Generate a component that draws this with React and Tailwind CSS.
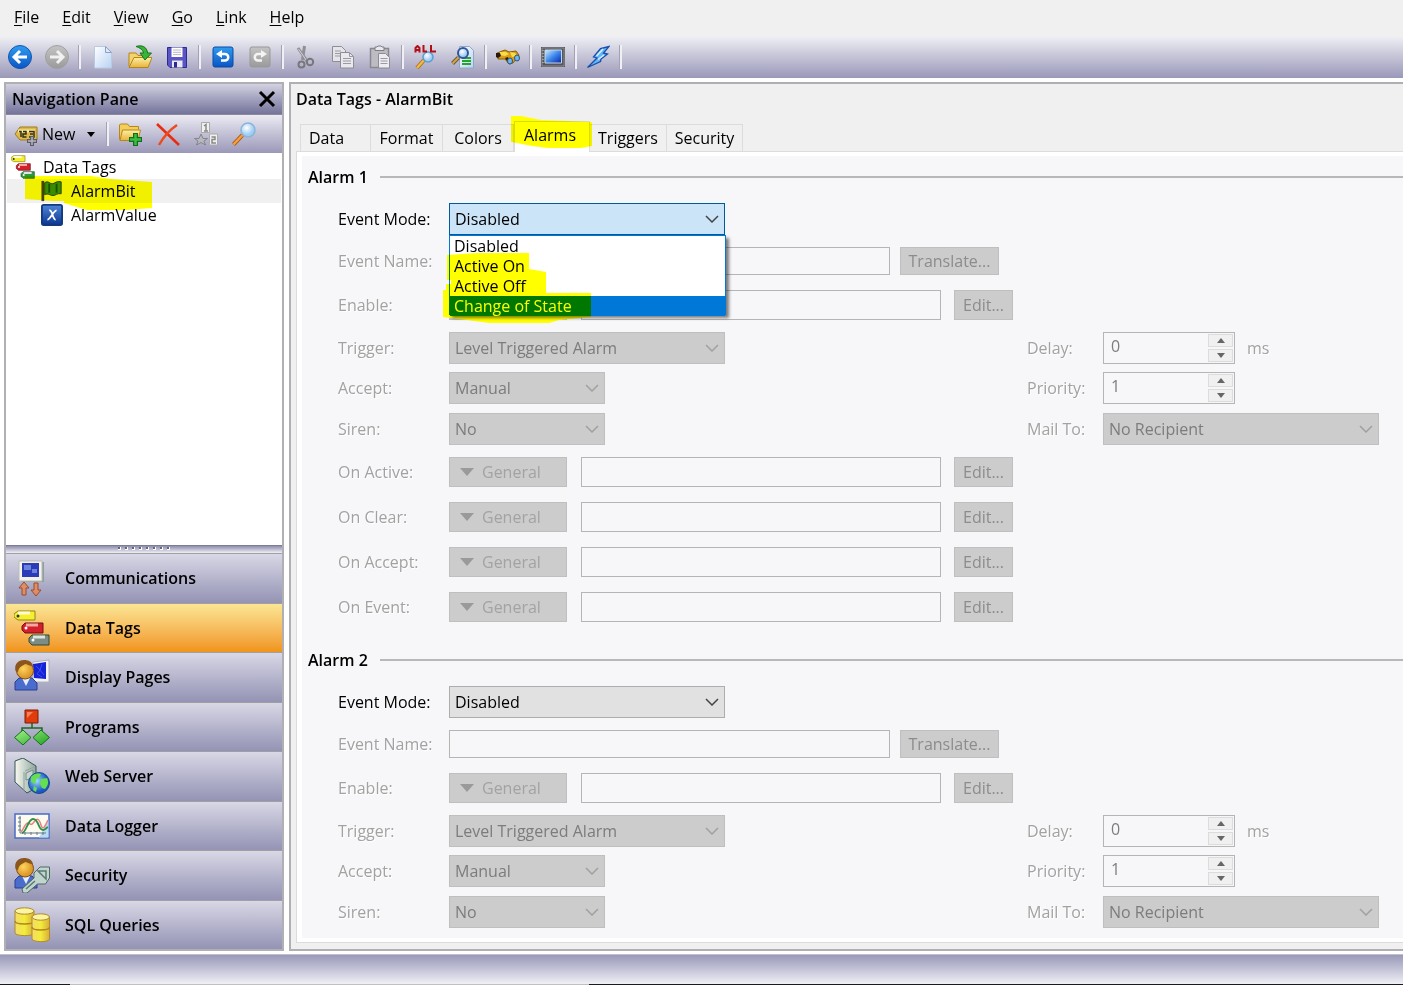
import React from "react";

const svgBase = "block h-6 w-6 shrink-0";

function Gradients() {
  return (
    <svg className="absolute h-0 w-0" aria-hidden="true">
      <defs>
        <linearGradient id="blue" x1="0" y1="0" x2="0" y2="1"><stop offset="0" stopColor="#2f9cf0" /><stop offset="1" stopColor="#0a55c4" /></linearGradient>
        <linearGradient id="navy" x1="0" y1="0" x2="0" y2="1"><stop offset="0" stopColor="#4f86d8" /><stop offset="1" stopColor="#0a3590" /></linearGradient>
        <linearGradient id="grey" x1="0" y1="0" x2="0" y2="1"><stop offset="0" stopColor="#c4c4c4" /><stop offset="1" stopColor="#9a9a9a" /></linearGradient>
        <linearGradient id="page" x1="0" y1="0" x2="1" y2="1"><stop offset="0" stopColor="#ffffff" /><stop offset="1" stopColor="#b9d2f3" /></linearGradient>
        <linearGradient id="gold" x1="0" y1="0" x2="0" y2="1"><stop offset="0" stopColor="#fdf0a4" /><stop offset="1" stopColor="#e8b23c" /></linearGradient>
        <linearGradient id="screen" x1="0" y1="0" x2="1" y2="1"><stop offset="0" stopColor="#d2eeff" /><stop offset=".5" stopColor="#3d88ec" /><stop offset="1" stopColor="#0b22a8" /></linearGradient>
        <linearGradient id="leaf" x1="0" y1="0" x2="1" y2="1"><stop offset="0" stopColor="#a4f08c" /><stop offset="1" stopColor="#1fa51d" /></linearGradient>
        <linearGradient id="steel" x1="0" y1="0" x2="1" y2="0"><stop offset="0" stopColor="#f8f8f0" /><stop offset="1" stopColor="#8ea79f" /></linearGradient>
        <linearGradient id="drum" x1="0" y1="0" x2="1" y2="0"><stop offset="0" stopColor="#f3dc68" /><stop offset=".5" stopColor="#f2ec3c" /><stop offset="1" stopColor="#d8ae3a" /></linearGradient>
        <radialGradient id="skin" cx=".4" cy=".4"><stop offset="0" stopColor="#ffd45c" /><stop offset="1" stopColor="#dd9a2c" /></radialGradient>
        <radialGradient id="globe" cx=".4" cy=".4"><stop offset="0" stopColor="#9fdcf8" /><stop offset="1" stopColor="#1c58c4" /></radialGradient>
        <radialGradient id="lens" cx=".4" cy=".35"><stop offset="0" stopColor="#ffffff" /><stop offset="1" stopColor="#9ccdf2" /></radialGradient>
      </defs>
    </svg>
  );
}

function Icon({ children, box = "0 0 24 24", className = svgBase }) {
  return <svg viewBox={box} className={className} fill="none" aria-hidden="true">{children}</svg>;
}

const icons = {
  back: <Icon><circle cx="12" cy="12" r="11.500" fill="url(#blue)" stroke="#1455ae" /><path d="M19 12H6M12 6l-6 6 6 6" stroke="#fff" strokeWidth="3" /></Icon>,
  forward: <Icon><circle cx="12" cy="12" r="11.500" fill="url(#grey)" stroke="#a0a0a0" /><path d="M5 12h13M12 6l6 6-6 6" stroke="#f1f1f1" strokeWidth="3" /></Icon>,
  blank: <Icon><path d="M3.500 1.500h11l6 6v15.500h-17z" fill="url(#page)" stroke="#b9cbe2" /><path d="M14.500 1.500v6h6z" fill="#dce8f8" stroke="#8aa2c4" /></Icon>,
  open: <Icon><path d="M1 21V8h7l2 2.500h10V13" fill="#f5d36a" stroke="#b58616" /><path d="M1 22.500 6 12.500h18l-4 10z" fill="url(#gold)" stroke="#b58616" /><path d="M8 1.500C14-.5 19 2 19.500 8h4L17 15l-5-7h3.500C15 4.500 12 3 8 1.500z" fill="#37b536" stroke="#14761b" /></Icon>,
  save: <Icon><path d="M2.500 2.500h19v20H5l-2.500-2.500z" fill="#5a55c4" stroke="#2d2a92" /><path d="M6.500 2.500h11v9.500h-11z" fill="#fff" /><path d="M8 5h8M8 7.300h8M8 9.600h8" stroke="#b7b7c6" /><path d="M7 15.500h10.500v7H7z" fill="#e9e9f4" /><path d="M9 17h3v5.500H9z" fill="#2d2a92" /></Icon>,
  undo: <Icon><rect x="2" y="2" width="20" height="20" rx="2" fill="url(#blue)" stroke="#0b4ba6" /><path d="M9 9h5a3 3 0 0 1 0 6.500h-4" stroke="#fff" strokeWidth="2.500" /><path d="M5 9 11 5v8z" fill="#fff" /></Icon>,
  redo: <Icon><rect x="2" y="2" width="20" height="20" rx="2" fill="url(#grey)" stroke="#999" /><path d="M15 9h-5a3 3 0 0 0 0 6.500h4" stroke="#f4f4f4" strokeWidth="2.500" /><path d="M19 9 13 5v8z" fill="#f4f4f4" /></Icon>,
  cut: <Icon><path d="m4 3 9 13M10.500 1 8.500 15" stroke="#8f8f95" strokeWidth="3" /><path d="m4.500 4 8 11.500" stroke="#d4d4d8" /><circle cx="7.500" cy="19.500" r="3" stroke="#77777d" strokeWidth="2" /><circle cx="16" cy="17" r="3.200" stroke="#77777d" strokeWidth="2" /></Icon>,
  copy: <Icon><path d="M1.500 1.500h9l4 4v11h-13z" fill="#e4e4ea" stroke="#8d8d92" /><path d="M4 6h6M4 8.500h6M4 11h6" stroke="#9a9aa0" /><path d="M9.500 7.500h9l4 4v11.500h-13z" fill="#e8e8ee" stroke="#8d8d92" /><path d="M18.500 7.500v4h4M12 13.500h8M12 16h8M12 18.500h8" stroke="#9a9aa0" /></Icon>,
  paste: <Icon><path d="M2.500 3.500h18v19h-18z" fill="#bcbcc2" stroke="#88888e" strokeWidth="1.500" /><path d="M7 5.500V2h2l1-1h3l1 1h2v3.500z" fill="#e8e8ee" stroke="#7d7d83" /><path d="M10.500 8.500h7l4 4V23h-11z" fill="#ececf2" stroke="#8d8d92" /><path d="M12.500 13.500h7M12.500 16h7M12.500 18.500h7" stroke="#9a9aa0" /></Icon>,
  findAll: <Icon><path d="m3 23 7-8" stroke="#a86b12" strokeWidth="4" /><path d="m3 23 7-8" stroke="#f0b848" strokeWidth="2.500" /><circle cx="14" cy="12" r="5" fill="url(#lens)" stroke="#5a9fd6" strokeWidth="1.500" /><path d="M1.500 7.500V3l2-2 2 2v4.500M1.500 5h4M9.500 0v6.500H13M17 0v6.500h5" stroke="#b30f18" strokeWidth="2" /></Icon>,
  preview: <Icon><path d="M8.500 1.500h10l4 4v17.500h-14z" fill="url(#page)" stroke="#8ea7c8" /><path d="M11 13h9M11 16h9M11 19h9" stroke="#24a52c" strokeWidth="2" /><path d="m1.500 18.500 6-6" stroke="#6b5a3b" strokeWidth="4" /><path d="m1.500 18.500 6-6" stroke="#d4a348" strokeWidth="2" /><circle cx="12" cy="8" r="5" fill="url(#lens)" stroke="#31569c" strokeWidth="2" /></Icon>,
  binoculars: <Icon><path d="m1 8 8-3 4 2 7-1 3 4-2 3-4 5-4 1-4-5H2z" fill="#dd9d10" stroke="#8a5c0a" /><path d="m4 7 6 0 3 2-4 2-6-1M14 7l5 1 2 3-5 1z" fill="#f9dc4b" /><path d="M0 8h4l1 3-3 2-2-1zM9 13l3-1 1 3-2 1z" fill="#241a0b" /><ellipse cx="14" cy="16" rx="2.500" ry="3" fill="#70b7ec" stroke="#315278" /><ellipse cx="21" cy="13" rx="2.500" ry="3" fill="#70b7ec" stroke="#315278" /></Icon>,
  monitor: <Icon><path d="M0 2h24v20H0z" fill="#54565b" /><path d="M1 3h22v18H1z" stroke="#8b8d92" /><path d="M4 5h16.500v13H4z" fill="url(#screen)" stroke="#c5d6e8" /><path d="M2 5v14" stroke="#d9d9d9" strokeDasharray="1 2" /></Icon>,
  bolt: <Icon><path d="M1.500 22.500 11 13 7.500 12l7-8.500L23 1.500 17.500 8l4 1-6.500 5-.5 2.500z" fill="#64b5f5" stroke="#174eae" strokeWidth="1.300" /><path d="m10.500 11 6.500-7M12 14.500l6-4.500" stroke="#d8f0ff" strokeWidth="1.500" /></Icon>,
  newTag: <Icon><path d="M1 12 6 5h17v13H6z" fill="#ddb945" stroke="#a27a1e" /><path d="M4 9h17" stroke="#fae99c" strokeWidth="3" /><path d="M5 9.500h2v5.500M9 9.500h3v2.500H9V15h3.500M15 9.500h5V15h-5M16 12h3" stroke="#33301f" strokeWidth="1.500" /><path d="M18 14v10M13 19h10" stroke="#5c5c64" strokeWidth="4" /><path d="M18 15v8M14 19h8" stroke="#b7b7c4" strokeWidth="1.500" /></Icon>,
  newFolder: <Icon><path d="M1.500 17.500V3l1-1h7l2 2.500h9v3" fill="#f4ce5c" stroke="#b98618" /><path d="M2 18.500 4.500 8h18L20 18.500z" fill="url(#gold)" stroke="#b98618" /><path d="M17.500 11v13M11 17.500h13" stroke="#116e1a" strokeWidth="5" /><path d="M17.500 12v11M12 17.500h11" stroke="#3ebc42" strokeWidth="2.500" /></Icon>,
  remove: <Icon><path d="m1 2 22 21" stroke="#e92c10" strokeWidth="2.500" /><path d="M21 3C15 7 8 14 3 23" stroke="#ee4a20" strokeWidth="2.500" /></Icon>,
  sort: <Icon><path d="M7.500.5h8v10h-8zM15.500 12h8v11h-8z" fill="#f0f0f0" stroke="#aaa" /><path d="m10 4 2-1.500V9m-2 0h4M17.500 15h3.500v2.500h-3v3.500h4" stroke="#888" strokeWidth="1.500" /><path d="m7 12 2 4.500h4.500L10 19l1.500 4L7 20.500 2.500 23 4 19 .5 16.500H5z" fill="#b8b8c0" stroke="#84848c" /></Icon>,
  search: <Icon><path d="m1.500 22.500 9-9.500" stroke="#ad5a10" strokeWidth="4" /><path d="m1.500 22.500 9-9.500" stroke="#f2a043" strokeWidth="2.500" /><circle cx="16" cy="8" r="7" fill="url(#lens)" stroke="#8ab4dc" strokeWidth="1.500" /></Icon>,
};

const navIcon = "block h-9 w-9 shrink-0";

function TagStack({ className = navIcon, last = "#7b8d84" }) {
  return (
    <Icon box="0 0 36 36" className={className}>
      <path d="M4 1h17v9H4L0 7V4z" fill="#f6ef2a" stroke="#8d8426" /><path d="M4 3h12" stroke="#fffcd6" strokeWidth="3" />
      <path d="M11 13h18v10H11l-3-3v-4z" fill="#d3202c" stroke="#6e1016" /><path d="M12 15h12" stroke="#f7a7a0" strokeWidth="3" />
      <path d="M18 25h17v10H18l-3-3v-4z" fill={last} stroke="#2e4a3c" /><path d="M19 27h12" stroke="#dce6e0" strokeWidth="3" />
      <circle cx="4" cy="6" r="1.500" fill="#333" /><circle cx="12" cy="18" r="1.500" fill="#fff" /><circle cx="19" cy="30" r="1.500" fill="#fff" />
    </Icon>
  );
}

function Person() {
  return (
    <g>
      <path d="M1 31v-8l4-4h13l5 5v7z" fill="#4a6ccc" stroke="#2b3f92" /><path d="m8 19 4 8 4-8z" fill="#e8eefc" />
      <circle cx="11" cy="11.500" r="8.500" fill="url(#skin)" stroke="#7b4a15" />
      <path d="M1.500 12C0 5 4 1 10 1c5 0 8 2 9 6-4 0-6-2-8-2-2 2-6 2-7 8z" fill="#8a561c" />
    </g>
  );
}

const navItems = [
  ["Communications", <Icon box="0 0 36 36" className={navIcon}><path d="M7 2h23v20H7z" fill="#8c9f9c" /><path d="M5 1h23v20H5z" fill="#f3f1ea" stroke="#b9bdb8" /><path d="M8 3h17v14H8z" fill="#2c3cb9" /><path d="M10 5h7v5h-7zM18 9h5v4h-5z" fill="#6b83dc" /><path d="m10 22 5 6h-3v7H8v-7H5zM22 36l5-6h-3v-7h-4v7h-3z" fill="#dd8e68" stroke="#9c4b2c" /></Icon>],
  ["Data Tags", <TagStack />],
  ["Display Pages", <Icon box="0 0 36 36" className={navIcon}><path d="M19 3 35 1v22H19z" fill="#f4f4f4" stroke="#b0b0bc" /><path d="m19 5 13-2v17l-12-1z" fill="#1522d8" /><path d="m22 7 4 4-3 4 5 3M28 5l-2 6 4 5" stroke="#3a50e8" /><Person /></Icon>],
  ["Programs", <Icon box="0 0 36 36" className={navIcon}><path d="M18 14v5M8 25v-6h20v6" stroke="#1d6a24" strokeWidth="1.500" /><path d="M11 1h13v13H11z" fill="#e03c0c" stroke="#7c1c08" /><path d="M13 3h6l-6 6z" fill="#f5825a" /><path d="m9 21 8 7.500L9 36l-8.500-7.500zM27 21l8.500 7.500L27 36l-8-7.500z" fill="url(#leaf)" stroke="#12701a" /></Icon>],
  ["Web Server", <Icon box="0 0 36 36" className={navIcon}><path d="m1 3 8-3 13 8v22l-9 5L1 24z" fill="url(#steel)" stroke="#345650" /><path d="M10 14v19M11 13l9-4" stroke="#8da59e" /><path d="m12 15 7-3v8l-7 2z" fill="#c8d4ce" stroke="#78928a" /><circle cx="25" cy="25" r="10.500" fill="url(#globe)" stroke="#174a8c" /><path d="M17 19c3-4 8-4 10-3l-2 4-3 1-1 5-4-2zM27 21l6-1c2 4 1 8-2 11l-3-1-2-4z" fill="#64e04e" /><path d="m20 28 3 2-1 4-3-2z" fill="#64e04e" /></Icon>],
  ["Data Logger", <Icon box="0 0 36 36" className={navIcon}><path d="M1 6h34v24H1z" fill="#fdfaf0" stroke="#4a6cc8" strokeWidth="1.500" /><path d="M25 29.500 34.500 12v17.500z" fill="#b8dcf4" /><path d="M6 8v17h26M4 10h3M4 14h3M4 18h3M4 22h3M11 24v3M17 24v3M23 24v3M29 24v3" stroke="#637a8c" /><path d="M7 24c3-3 4-9 7-9 3 1 3 3 6-1s5-4 7 3 5-1 7-5" stroke="#ec8080" strokeWidth="1.500" /><path d="M8 25c4 0 6-14 11-14 6 0 5 11 10 11 2 0 3-2 5-3" stroke="#2f9046" strokeWidth="1.800" /></Icon>],
  ["Security", <Icon box="0 0 36 36" className={navIcon}><Person /><path d="m8 32 12-11V16l6-6h9.500v11l-4 6h-8L13 36H9z" fill="#c2d4ce" stroke="#4c6a62" /><path d="M24 14h8v8zM12 32l9-8" stroke="#587a70" strokeWidth="1.500" /></Icon>],
  ["SQL Queries", <Icon box="0 0 36 36" className={navIcon}><path d="M1 4v22c0 3 18 4 19 0V4z" fill="url(#drum)" stroke="#b08a2c" /><ellipse cx="10.500" cy="4" rx="9.500" ry="3.200" fill="#fbf4a0" stroke="#b08a2c" /><path d="M1 14c0 4 19 4 19 0" stroke="#b5861c" strokeWidth="1.500" /><path d="M18 10v22c0 3 17 4 17.500 0V10z" fill="url(#drum)" stroke="#b08a2c" /><ellipse cx="26.700" cy="10" rx="8.700" ry="3.200" fill="#fbf4a0" stroke="#b08a2c" /><path d="M18 20c0 4 17.500 4 17.500 0" stroke="#b5861c" strokeWidth="1.500" /></Icon>],
];

const toolbarGroups = [
  [["Back", "back"], ["Forward", "forward"]],
  [["New", "blank"], ["Open", "open"], ["Save", "save"]],
  [["Undo", "undo"], ["Redo", "redo"]],
  [["Cut", "cut"], ["Copy", "copy"], ["Paste", "paste"]],
  [["Find all", "findAll"], ["Find in page", "preview"]],
  [["Find", "binoculars"]],
  [["Display", "monitor"]],
  [["Run", "bolt"]],
];

function Divider() {
  return <span className="h-6 w-[3px] border-r-2 border-l border-l-[#a3a2b4] border-r-[#f0f0f4]" />;
}

function Toolbar() {
  return (
    <div className="flex h-[42px] shrink-0 items-center bg-linear-to-b from-[#f0f0f5] to-[#9a98b8] pl-px">
      {toolbarGroups.map((group, i) => (
        <div key={i} className="flex items-center">
          {group.map(([label, icon]) => (
            <button key={label} aria-label={label} className="flex w-[37px] justify-center">{icons[icon]}</button>
          ))}
          <div className={i < 4 ? "flex w-[9px] justify-center" : "flex w-2 justify-center"}><Divider /></div>
        </div>
      ))}
    </div>
  );
}

function NavigationPane() {
  return (
    <aside className="flex w-[280px] shrink-0 flex-col border-2 border-[#b0b0b4]">
      <header className="flex h-[30px] shrink-0 items-center justify-between bg-linear-to-b from-[#d3d2e2] to-[#74739a] px-1.5 font-semibold">
        <h2>Navigation Pane</h2>
        <button aria-label="Close">
          <Icon box="0 0 18 18" className="block h-[18px] w-[18px]"><path d="m2 2 14 14M16 2 2 16" stroke="#000" strokeWidth="3" /></Icon>
        </button>
      </header>
      <div className="flex h-[39px] shrink-0 items-center border-t border-[#8a8a9c] bg-linear-to-b from-[#ecebf3] to-[#9a98b8] pl-2">
        <button className="flex items-center gap-1">{icons.newTag}New
          <Icon box="0 0 8 5" className="ml-2 block h-[5px] w-2"><path d="M0 0h8L4 5z" fill="#000" /></Icon>
        </button>
        <div className="ml-2 flex w-2 justify-center"><Divider /></div>
        <button aria-label="New folder" className="flex w-[38px] justify-center">{icons.newFolder}</button>
        <button aria-label="Delete" className="flex w-[38px] justify-center">{icons.remove}</button>
        <button aria-label="Sort" className="flex w-[38px] justify-center">{icons.sort}</button>
        <button aria-label="Search" className="flex w-[38px] justify-center">{icons.search}</button>
      </div>
      <ul className="min-h-0 flex-1 bg-white px-px pt-0.5 leading-6">
        <li className="flex h-6 items-center gap-2 pl-1"><TagStack className="block h-6 w-6" last="#2f9a3c" />Data Tags</li>
        <li className="relative flex h-6 items-center gap-2 bg-[#f0f0f0] pl-[34px]">
          <Icon className="block h-[22px] w-[22px]"><path d="M2 1v22" stroke="#444" strokeWidth="3" /><path d="M4 3c4-3 6 2 9 1s4-3 9-2v13c-4-1-6 2-9 2s-5-3-9-1z" fill="#3a8c2e" stroke="#1a3d12" /><path d="M9 4v10M17 4v10" stroke="#1a5018" strokeWidth="2" /></Icon>
          AlarmBit
          <svg className="pointer-events-none absolute -top-1 left-[18px] h-9 w-32 mix-blend-multiply" viewBox="0 0 128 36"><path d="M0 1h66l20 3 41 3v26l-26 2H62l-23-7V26H28L0 24z" fill="#ff0" /></svg>
        </li>
        <li className="flex h-6 items-center gap-2 pl-[34px]">
          <Icon className="block h-[22px] w-[22px]"><rect x="1" y="1" width="22" height="22" rx="2" fill="url(#navy)" stroke="#123a7c" strokeWidth="2" /><path d="M9 7c4-1 3 10 7 10M17 7c-3 0-7 10-10 10" stroke="#fff" strokeWidth="2" /></Icon>
          AlarmValue
        </li>
      </ul>
      <div className="flex h-2 shrink-0 justify-center gap-1 border-t border-[#7d7c96] bg-linear-to-b from-[#8f8eae] to-[#f0f0f6] pt-px">
        {[0, 1, 2, 3, 4, 5, 6, 7].map((n) => <span key={n} className="h-[3px] w-[3px] border-r border-b border-white bg-[#66667a]" />)}
      </div>
      <nav className="flex h-[396px] shrink-0 flex-col">
        {navItems.map(([label, icon]) => (
          <button
            key={label}
            className={
              label === "Data Tags"
                ? "flex flex-1 items-center gap-[15px] border-t border-[#a0a0a4] bg-linear-to-b from-[#fae693] to-[#f09414] pl-2 font-semibold"
                : "flex flex-1 items-center gap-[15px] border-t border-[#a0a0a4] bg-linear-to-b from-[#d9d8e6] to-[#9493b4] pl-2 font-semibold"
            }
          >
            {icon}{label}
          </button>
        ))}
      </nav>
    </aside>
  );
}

const selectStyles = {
  open: "h-8 w-full appearance-none border border-[#005a9e] bg-[#cce4f7] pl-[5px] text-black outline-none",
  normal: "h-8 w-full appearance-none border border-[#adadad] bg-[#e1e1e1] pl-[5px] text-black outline-none",
  disabled: "h-8 w-full appearance-none border border-[#bfbfbf] bg-[#ccc] pl-[5px] text-[#7c7c7c] opacity-100 outline-none",
};

function Select({ id, options, state = "disabled", width, children }) {
  return (
    <div className={`relative ${width}`}>
      <select id={id} disabled={state === "disabled"} className={selectStyles[state]}>
        {options.map((o) => <option key={o}>{o}</option>)}
      </select>
      <svg viewBox="0 0 14 8" fill="none" className="pointer-events-none absolute top-3 right-1.5 h-2 w-3.5">
        <path d="m1 1 6 6 6-6" stroke={state === "disabled" ? "#a0a0a0" : "#444"} strokeWidth="1.500" />
      </svg>
      {children}
    </div>
  );
}

const modes = ["Disabled", "Active On", "Active Off", "Change of State"];

function ModeList() {
  return (
    <div className="absolute top-8 left-0 z-10 w-[277px]">
      <ul role="listbox" aria-label="Event Mode options" className="flex h-20 flex-col border border-[#0078d7] bg-white text-black shadow-[3px_3px_3px_rgba(0,0,0,0.5)]">
        {modes.map((m) => (
          <li key={m} role="option" aria-selected={m === "Change of State"} className={m === "Change of State" ? "flex flex-1 items-center bg-[#0078d7] pl-1 text-white" : "flex flex-1 items-center pl-1"}>{m}</li>
        ))}
      </ul>
      <svg className="pointer-events-none absolute top-[18px] -left-1.5 h-[70px] w-[150px] mix-blend-multiply" viewBox="0 0 150 70">
        <path d="M4 2l30-2h52v16l17 3v21h45v24l-32 3-10 3H46l-22-3-24-3V37h3v-6h5v-4H4z" fill="#ff0" />
      </svg>
    </div>
  );
}

const dimLabel = "text-[#a2a2a2] [text-shadow:1px_1px_0_#fff]";

function Row({ id, label, active = false, className = "h-8", children, right }) {
  return (
    <div className={`grid grid-cols-[111px_578px_76px_1fr] items-center ${className}`}>
      <label htmlFor={id} className={active ? "text-black" : dimLabel}>{label}</label>
      <div className="flex items-center">{children}</div>
      {right}
    </div>
  );
}

function Expression({ id, label, className, covered = false }) {
  return (
    <Row id={id} label={label} className={className}>
      <button disabled aria-label="General" className="flex h-[30px] w-[118px] items-center gap-2 border border-[#bfbfbf] bg-[#ccc] pl-2.5 text-[#a3a3a3]">
        {!covered && <><Icon box="0 0 14 8" className="block h-2 w-3.5"><path d="M0 0h14L7 8z" fill="#9a9a9a" /></Icon>General</>}
      </button>
      <input id={id} disabled className="ml-3.5 h-[30px] w-[360px] border border-[#b5b5b5] bg-[#f7f7f9]" />
      <button disabled className="ml-[13px] h-[30px] w-[59px] border border-[#bfbfbf] bg-[#ccc] text-[#8c8c8c]">Edit...</button>
    </Row>
  );
}

function Spinner({ id, label, value, unit }) {
  return (
    <>
      <label htmlFor={id} className={dimLabel}>{label}</label>
      <div className="flex items-center gap-3">
        <div className="flex h-8 w-[132px] border border-[#b5b5b5] bg-[#f7f7f9] p-px">
          <input id={id} disabled defaultValue={value} className="mb-1 w-[103px] pl-1.5 text-[#7d7d7d]" />
          <div className="flex flex-1 flex-col gap-0.5">
            <button disabled aria-label={`Increase ${label}`} className="flex flex-1 items-center justify-center border border-[#dcdcdc] bg-[#f0f0f0]"><Icon box="0 0 8 5" className="block h-[5px] w-2"><path d="M0 5h8L4 0z" fill="#666" /></Icon></button>
            <button disabled aria-label={`Decrease ${label}`} className="flex flex-1 items-center justify-center border border-[#dcdcdc] bg-[#f0f0f0]"><Icon box="0 0 8 5" className="block h-[5px] w-2"><path d="M0 0h8L4 5z" fill="#666" /></Icon></button>
          </div>
        </div>
        {unit && <span className={dimLabel}>{unit}</span>}
      </div>
    </>
  );
}

function Alarm({ n, open = false, actions = [] }) {
  const id = (name) => `alarm${n}-${name}`;
  return (
    <section>
      <div className="flex h-6 items-center gap-3 pl-1.5">
        <h3 className="font-semibold">Alarm {n}</h3>
        <span className="h-0.5 flex-1 bg-[#b8b8ba]" />
      </div>
      <div className="pt-3.5 pl-9">
        <Row id={id("mode")} label="Event Mode:" active>
          <Select id={id("mode")} options={modes} state={open ? "open" : "normal"} width="w-[276px]">{open && <ModeList />}</Select>
        </Row>
        <Row id={id("name")} label="Event Name:" className="mt-3 h-7">
          <input id={id("name")} disabled className="h-7 w-[441px] border border-[#b5b5b5] bg-[#f7f7f9]" />
          <button disabled className="ml-2.5 h-7 w-[99px] border border-[#bfbfbf] bg-[#ccc] text-[#8c8c8c]">Translate...</button>
        </Row>
        <Expression id={id("enable")} label="Enable:" className="mt-[15px] h-[30px]" covered={open} />
        <Row id={id("trigger")} label="Trigger:" className="mt-3 h-8" right={<Spinner id={id("delay")} label="Delay:" value="0" unit="ms" />}>
          <Select id={id("trigger")} options={["Level Triggered Alarm"]} width="w-[276px]" />
        </Row>
        <Row id={id("accept")} label="Accept:" className="mt-2 h-8" right={<Spinner id={id("priority")} label="Priority:" value="1" />}>
          <Select id={id("accept")} options={["Manual"]} width="w-[156px]" />
        </Row>
        <Row
          id={id("siren")}
          label="Siren:"
          className="mt-[9px] h-8"
          right={<><label htmlFor={id("mail")} className={dimLabel}>Mail To:</label><Select id={id("mail")} options={["No Recipient"]} width="w-[276px]" /></>}
        >
          <Select id={id("siren")} options={["No"]} width="w-[156px]" />
        </Row>
        {actions.map((a, i) => (
          <Expression key={a} id={id(a)} label={`${a}:`} className={i === 0 ? "mt-3 h-[30px]" : "mt-[15px] h-[30px]"} />
        ))}
      </div>
    </section>
  );
}

const tabs = [["Data", "w-[71px] pl-2 text-left"], ["Format", "w-[72px]"], ["Colors", "w-[71px]"], ["Alarms", "w-[76px]"], ["Triggers", "w-[77px]"], ["Security", "w-[76px]"]];

function Editor() {
  return (
    <main className="flex min-w-0 flex-1 flex-col border-y-2 border-l-2 border-[#b0b0b4] bg-[#f0f0f0] pb-1.5 pl-[5px]">
      <h1 className="h-[37px] pt-[5px] font-semibold">Data Tags - AlarmBit</h1>
      <div role="tablist" className="relative z-10 -mb-px flex items-end pl-1">
        {tabs.map(([label, size]) =>
          label === "Alarms" ? (
            <button key={label} role="tab" aria-selected="true" className={`relative h-[31px] border border-b-0 border-[#dcdcdc] bg-white pr-1 pb-1 ${size}`}>
              {label}
              <svg className="pointer-events-none absolute -top-1.5 -left-1 h-8 w-[81px] mix-blend-multiply" viewBox="0 0 81 32"><path d="M0 0h10l20 4 51 2v24l-11 2H37l-16-2-15-3-6-1z" fill="#ff0" /></svg>
            </button>
          ) : (
            <button key={label} role="tab" aria-selected="false" className={`h-7 border-t border-r border-b border-[#dcdcdc] bg-[#f0f0f0] first:border-l ${size}`}>{label}</button>
          ),
        )}
      </div>
      <div className="min-h-0 flex-1 overflow-hidden border-y border-l border-[#dcdcdc] bg-white py-1 pl-[5px]">
        <div className="h-full bg-[#f7f7f9] pt-[9px]">
          <Alarm n={1} open actions={["On Active", "On Clear", "On Accept", "On Event"]} />
          <div className="h-[26px]" />
          <Alarm n={2} />
        </div>
      </div>
    </main>
  );
}

export default function App() {
  return (
    <div className="flex h-screen min-h-[985px] flex-col overflow-hidden bg-white font-['Open_Sans','Noto_Sans',sans-serif] text-base leading-5 text-black">
      <Gradients />
      <nav className="flex h-9 shrink-0 items-center gap-[23px] bg-[#f0f0f0] pb-0.5 pl-3.5">
        {["File", "Edit", "View", "Go", "Link", "Help"].map((m) => (
          <button key={m}><span className="underline underline-offset-2">{m[0]}</span>{m.slice(1)}</button>
        ))}
      </nav>
      <Toolbar />
      <div className="flex min-h-0 flex-1 gap-[5px] pt-1 pb-[3px] pl-1">
        <NavigationPane />
        <Editor />
      </div>
      <footer className="shrink-0">
        <div className="h-[30px] border-t border-[#c0c0cc] bg-linear-to-b from-[#9a99b9] to-[#f0f0f6]" />
        <div className="flex h-px bg-[#1a1a22]"><span className="ml-[5%] w-[37%] bg-[#c0c0c4]" /></div>
      </footer>
    </div>
  );
}
